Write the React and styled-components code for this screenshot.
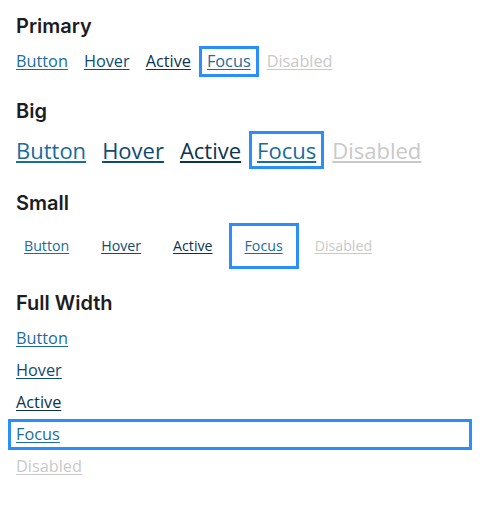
import styled, { createGlobalStyle, css } from "styled-components";

const GlobalStyle = createGlobalStyle`
  html, body {
    margin: 0;
    padding: 0;
    background: #ffffff;
  }
  body {
    font-family: "Open Sans", "Noto Sans", sans-serif;
  }
`;

const Page = styled.div`
  width: 480px;
  box-sizing: border-box;
  padding: 12px 8px 24px;
  display: flex;
  flex-direction: column;
  gap: 20px;
`;

const Section = styled.section`
  display: flex;
  flex-direction: column;
`;

const Heading = styled.h2`
  margin: 0 0 6px;
  padding: 0 8px;
  font-family: "Inter", "Liberation Sans", sans-serif;
  font-weight: 600;
  font-size: 20px;
  line-height: 28px;
  color: #1d1d1f;
`;

const Row = styled.div`
  display: flex;
  align-items: flex-start;
  ${({ $stacked }) =>
    $stacked &&
    css`
      flex-direction: column;
      align-items: stretch;
      gap: 1px;
    `}
`;

const sizes = {
  primary: css`
    font-size: 16.3px;
    line-height: 23px;
    padding: 4px 8px;
  `,
  big: css`
    font-size: 22px;
    line-height: 30px;
    padding: 4px 8px;
  `,
  small: css`
    font-size: 14.2px;
    line-height: 20px;
    padding: 13px 16px;
  `,
};

const colors = {
  normal: "#196c9d",
  hover: "#0e4b72",
  active: "#0b3450",
  focus: "#196c9d",
  disabled: "#c9c9c9",
};

const LinkButton = styled.button`
  appearance: none;
  border: none;
  background: transparent;
  margin: 0;
  font-family: "Open Sans", "Noto Sans", sans-serif;
  font-weight: 400;
  text-align: left;
  text-decoration: underline;
  text-underline-offset: 2px;
  cursor: pointer;
  color: ${({ $state }) => colors[$state]};
  ${({ $size }) => sizes[$size]}
  ${({ $state }) =>
    $state === "focus" &&
    css`
      box-shadow: inset 0 0 0 3px #2b8ffb;
    `}
  ${({ $state }) =>
    $state === "disabled" &&
    css`
      cursor: default;
    `}
`;

const states = [
  ["normal", "Button"],
  ["hover", "Hover"],
  ["active", "Active"],
  ["focus", "Focus"],
  ["disabled", "Disabled"],
];

const groups = [
  { title: "Primary", size: "primary" },
  { title: "Big", size: "big" },
  { title: "Small", size: "small" },
  { title: "Full Width", size: "primary", stacked: true },
];

function App() {
  return (
    <>
      <GlobalStyle />
      <Page>
        {groups.map((g) => (
          <Section key={g.title}>
            <Heading>{g.title}</Heading>
            <Row $stacked={g.stacked}>
              {states.map(([state, label]) => (
                <LinkButton key={state} $state={state} $size={g.size} disabled={state === "disabled"}>
                  {label}
                </LinkButton>
              ))}
            </Row>
          </Section>
        ))}
      </Page>
    </>
  );
}

export default App;
